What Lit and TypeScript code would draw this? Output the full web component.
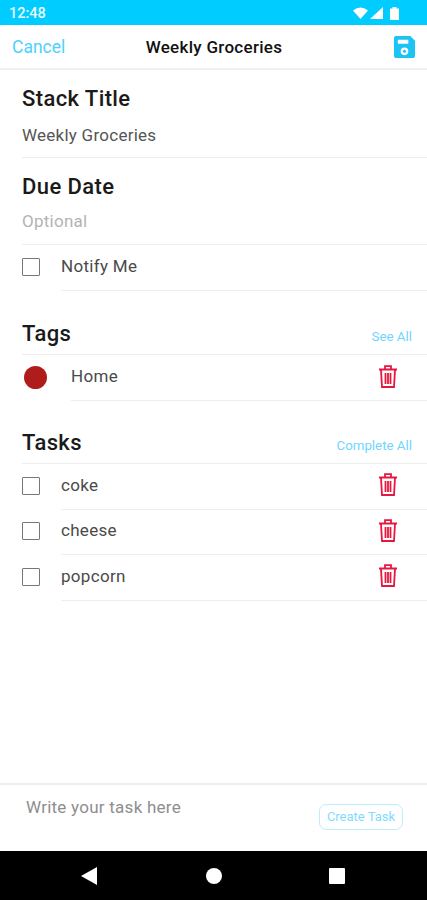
import {LitElement, html, css, svg} from 'lit';
import {customElement} from 'lit/decorators.js';

const trash = html`<svg class="trash" viewBox="0 0 18 23" width="18" height="23">
  <path fill="none" stroke="#e8173f" stroke-width="1.800" d="M6 3.500V1.200h6v2.300M0 4.500h18M2 5l1 17h12L16 5"/>
  <path fill="none" stroke="#e8173f" stroke-width="1.800" d="M6.500 8v11M9 8v11M11.500 8v11"/>
</svg>`;

const statusIcons = svg`
  <path fill="#fff" d="M0 3.500Q7.500 -2.500 15 3.500L7.500 12Z"/>
  <path fill="#fff" d="M30 0V12H17Z"/>
  <path fill="#fff" d="M37 1.500h2.500V0h4v1.500H46V13H37Z"/>`;

// the notify row has no delete button, only the task rows do
function trashFor(cls: string) {
  return cls === 'task' ? trash : null;
}

@customElement('app-root')
export class AppRoot extends LitElement {
  static styles = css`
    :host {
      display: flex;
      flex-direction: column;
      width: 427px;
      height: 900px;
      background: #fff;
      font-family: Roboto, "Noto Sans", sans-serif;
      color: #333;
    }
    .status {
      height: 25px;
      background: #00ccff;
      display: flex;
      align-items: center;
      justify-content: space-between;
      padding: 1px 28px 0 9px;
      box-sizing: border-box;
      color: #e6faff;
      font-size: 14.500px;
      font-weight: 500;
    }
    .status svg {
      display: block;
    }
    .header {
      height: 45px;
      box-sizing: border-box;
      border-bottom: 2px solid #f0f0f0;
      display: grid;
      grid-template-columns: 1fr auto 1fr;
      align-items: center;
      padding: 0 11px 0 12px;
    }
    .cancel {
      color: #4fcfff;
      font-size: 17.500px;
    }
    .title {
      color: #111;
      font-size: 17px;
      font-weight: 500;
      letter-spacing: 0.300px;
    }
    .save {
      justify-self: end;
      display: block;
      margin-top: 1px;
    }
    .content {
      flex: 1;
      padding-left: 22px;
    }
    h2 {
      margin: 0;
      font-size: 22px;
      font-weight: 500;
      letter-spacing: 0.400px;
      color: #1a1a1a;
      line-height: 26px;
    }
    .stack-head {
      padding-top: 16px;
    }
    .due-head {
      padding-top: 16px;
    }
    .field {
      font-size: 17px;
      line-height: 20px;
      letter-spacing: 0.250px;
      padding: 13px 0 12px;
      border-bottom: 1px solid #eee;
      color: #555;
    }
    .field.hint {
      color: #b3b3b3;
      padding: 11px 0 13px;
    }
    .row {
      display: flex;
      align-items: center;
      height: 46px;
      box-sizing: border-box;
      font-size: 17px;
      letter-spacing: 0.300px;
      color: #4a4a4a;
    }
    .row.task {
      height: 45.500px;
    }
    .box {
      flex: none;
      width: 18px;
      height: 18px;
      box-sizing: border-box;
      border: 1.500px solid #777;
      border-radius: 1px;
      margin-right: 21px;
      margin-bottom: 2px;
    }
    .row-body {
      flex: 1;
      align-self: stretch;
      display: flex;
      align-items: center;
      justify-content: space-between;
      padding: 0 30px 3px 0;
      border-bottom: 1px solid #eee;
    }
    .dot {
      flex: none;
      width: 23px;
      height: 23px;
      border-radius: 50%;
      background: #b01c1c;
      margin: 0 24px 2px 2px;
    }
    .section-head {
      display: flex;
      justify-content: space-between;
      align-items: flex-end;
      height: 42px;
      padding: 0 15px 7px 0;
      box-sizing: border-box;
      border-bottom: 1px solid #eee;
    }
    .tags {
      margin-top: 22px;
    }
    .tasks {
      margin-top: 21px;
    }
    .link {
      color: #6fd6ff;
      font-size: 13.300px;
      line-height: 17px;
      margin-bottom: 2px;
    }
    .footer {
      height: 68px;
      box-sizing: border-box;
      border-top: 2px solid #eee;
      display: flex;
      justify-content: space-between;
      padding: 12px 24px 0 26px;
    }
    .placeholder {
      font-size: 17px;
      line-height: 20px;
      letter-spacing: 0.250px;
      color: #8e8e8e;
    }
    .create {
      align-self: flex-start;
      margin-top: 7px;
      width: 84px;
      height: 26px;
      box-sizing: border-box;
      border: 1px solid #bdeeff;
      border-radius: 7px;
      padding-bottom: 2px;
      color: #7fdcff;
      font-size: 13px;
      display: flex;
      align-items: center;
      justify-content: center;
    }
    .nav {
      height: 49px;
      background: #000;
      display: block;
    }
    .nav svg {
      display: block;
    }
  `;

  private checkRow(name: string, cls = '') {
    return html`<div class="row ${cls}">
      <span class="box"></span>
      <div class="row-body"><span>${name}</span>${trashFor(cls)}</div>
    </div>`;
  }

  render() {
    return html`
      <div class="status">
        <span>12:48</span>
        <svg width="46" height="13" viewBox="0 0 46 13">${statusIcons}</svg>
      </div>
      <div class="header">
        <span class="cancel">Cancel</span>
        <span class="title">Weekly Groceries</span>
        <svg class="save" width="23" height="22" viewBox="0 0 22 23">
          <path fill="#1cc4f5" fill-rule="evenodd" d="M2 0H17L22 5V21a2 2 0 0 1-2 2H2a2 2 0 0 1-2-2V2a2 2 0 0 1 2-2ZM4 4V8H15V4ZM11 12a4 4 0 1 0 0 8a4 4 0 1 0 0-8Z"/>
          <circle cx="11" cy="16" r="1.600" fill="#1cc4f5"/>
        </svg>
      </div>
      <div class="content">
        <h2 class="stack-head">Stack Title</h2>
        <div class="field">Weekly Groceries</div>
        <h2 class="due-head">Due Date</h2>
        <div class="field hint">Optional</div>
        ${this.checkRow('Notify Me')}
        <div class="section-head tags"><h2>Tags</h2><span class="link">See All</span></div>
        <div class="row">
          <span class="dot"></span>
          <div class="row-body"><span>Home</span>${trash}</div>
        </div>
        <div class="section-head tasks"><h2>Tasks</h2><span class="link">Complete All</span></div>
        ${['coke', 'cheese', 'popcorn'].map((t) => this.checkRow(t, 'task'))}
      </div>
      <div class="footer">
        <span class="placeholder">Write your task here</span>
        <span class="create">Create Task</span>
      </div>
      <div class="nav">
        <svg width="427" height="49" viewBox="0 0 427 49">
          <path fill="#fff" d="M97 16V34L81 25Z"/>
          <circle cx="214" cy="25" r="8" fill="#fff"/>
          <rect x="329" y="17" width="16" height="16" rx="1" fill="#fff"/>
        </svg>
      </div>
    `;
  }
}
